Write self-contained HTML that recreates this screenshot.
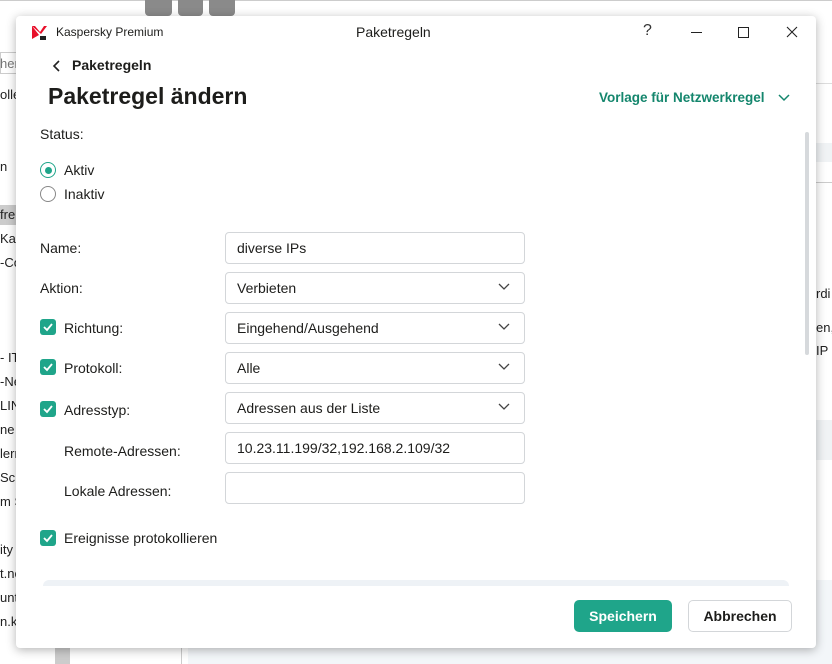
<!DOCTYPE html>
<html><head><meta charset="utf-8"><style>
*{box-sizing:border-box;margin:0;padding:0}
body{width:832px;height:664px;overflow:hidden;background:#fff;font-family:"Liberation Sans",sans-serif;position:relative;color:#1d1d1b}
.a{position:absolute}
.bg{font-size:13px;color:#222;white-space:nowrap}
.dlg{position:absolute;left:16px;top:16px;width:800px;height:632px;background:#fff;border-radius:4px;box-shadow:0 2px 10px rgba(0,0,0,.3)}
.lbl{position:absolute;font-size:14px;color:#1d1d1b}
.inp{position:absolute;left:209px;width:300px;height:32px;border:1px solid #d3d6d9;border-radius:4px;font-size:14px;padding:7px 11px}
.chev{position:absolute;right:14px;top:10px;width:12px;height:8px}
.cb{position:absolute;left:24px;width:16px;height:16px;background:#1fa58a;border-radius:3px}
</style></head><body>
<div class="a" style="left:0;top:0;width:832px;height:1px;background:#ccc"></div>
<div class="a" style="left:145px;top:0;width:27px;height:16px;background:#8a8a8a;border-radius:0 0 4px 4px"></div>
<div class="a" style="left:178px;top:0;width:25px;height:16px;background:#8a8a8a;border-radius:0 0 4px 4px"></div>
<div class="a" style="left:209px;top:0;width:26px;height:16px;background:#8a8a8a;border-radius:0 0 4px 4px"></div>
<div class="a" style="left:0;top:52px;width:20px;height:22px;border:1px solid #ccc"></div>
<div class="a" style="left:0;top:205px;width:20px;height:20px;background:#ccc"></div>
<div class="a" style="left:55px;top:640px;width:15px;height:24px;background:#ccc"></div>
<div class="a" style="left:181px;top:640px;width:1px;height:24px;background:#ccc"></div>
<div class="a" style="left:188px;top:640px;width:644px;height:24px;background:#f3f6f9"></div>
<div class="a" style="left:816px;top:83px;width:16px;height:1px;background:#ddd"></div>
<div class="a" style="left:816px;top:143px;width:16px;height:19px;background:#f0f3f5"></div>
<div class="a" style="left:816px;top:182px;width:16px;height:1px;background:#ccc"></div>
<div class="a" style="left:816px;top:420px;width:16px;height:40px;background:#f0f3f5"></div>
<div class="a" style="left:816px;top:580px;width:16px;height:60px;background:#f3f6f9"></div>
<div class="bg a" style="left:0;top:56px;color:#777">her</div>
<div class="bg a" style="left:0;top:87px">olle</div>
<div class="bg a" style="left:0;top:159px">n</div>
<div class="bg a" style="left:0;top:207px">fre</div>
<div class="bg a" style="left:0;top:231px">Kasp</div>
<div class="bg a" style="left:0;top:255px">-Co</div>
<div class="bg a" style="left:0;top:350px">- IT</div>
<div class="bg a" style="left:0;top:374px">-Ne</div>
<div class="bg a" style="left:0;top:398px">LINK</div>
<div class="bg a" style="left:0;top:422px">ne -</div>
<div class="bg a" style="left:0;top:446px">lern</div>
<div class="bg a" style="left:0;top:470px">Sch</div>
<div class="bg a" style="left:0;top:494px">m S</div>
<div class="bg a" style="left:0;top:542px">ity</div>
<div class="bg a" style="left:0;top:566px">t.ne</div>
<div class="bg a" style="left:0;top:590px">unt</div>
<div class="bg a" style="left:0;top:614px">n.k</div>
<div class="bg a" style="left:816px;top:286px">rdi</div>
<div class="bg a" style="left:816px;top:320px">en,</div>
<div class="bg a" style="left:816px;top:343px">IP</div>

<div class="dlg">
 <svg class="a" style="left:16px;top:9px" width="16" height="16" viewBox="0 0 16 16"><path d="M0 1h3l5 6 4-6h3L9 9z" fill="#e8102a"/><path d="M0 1l7 9-0 0L0 14z" fill="#e8102a"/><path d="M8 11h6v4H8z" fill="#222"/></svg>
 <div class="a" style="left:40px;top:9px;font-size:12px">Kaspersky Premium</div>
 <div class="a" style="left:340px;top:8px;font-size:14px">Paketregeln</div>
 <div class="a" style="left:627px;top:6px;font-size:16px;color:#333">?</div>
 <div class="a" style="left:675px;top:16px;width:11px;height:1px;background:#222"></div>
 <div class="a" style="left:722px;top:11px;width:11px;height:11px;border:1px solid #222"></div>
 <svg class="a" style="left:770px;top:10px" width="12" height="12"><path d="M1 1L11 11M11 1L1 11" stroke="#222" stroke-width="1.1"/></svg>
 <svg class="a" style="left:36px;top:44px" width="10" height="12"><path d="M7 1L2 6l5 5" stroke="#222" stroke-width="1.6" fill="none"/></svg>
 <div class="a" style="left:56px;top:41px;font-size:14px;font-weight:bold">Paketregeln</div>
 <div class="a" style="left:32px;top:67px;font-size:23px;font-weight:bold">Paketregel ändern</div>
 <div class="a" style="left:583px;top:74px;font-size:13.5px;font-weight:bold;color:#14866d">Vorlage für Netzwerkregel</div>
 <svg class="a" style="left:762px;top:78px" width="12" height="8"><path d="M1 1l5 5 5-5" stroke="#14866d" stroke-width="1.5" fill="none"/></svg>
 <div class="a" style="left:789px;top:116px;width:4px;height:223px;background:#d6d9dc;border-radius:2px"></div>
 <div class="lbl" style="left:24px;top:110px">Status:</div>
 <div class="a" style="left:24px;top:146px;width:16px;height:16px;border:1.5px solid #1fa58a;border-radius:50%"></div>
 <div class="a" style="left:28.5px;top:150.5px;width:7px;height:7px;background:#1fa58a;border-radius:50%"></div>
 <div class="lbl" style="left:48px;top:146px">Aktiv</div>
 <div class="a" style="left:24px;top:170px;width:16px;height:16px;border:1.5px solid #888;border-radius:50%"></div>
 <div class="lbl" style="left:48px;top:170px">Inaktiv</div>

 <div class="lbl" style="left:24px;top:224px">Name:</div>
 <div class="inp" style="top:216px">diverse IPs</div>
 <div class="lbl" style="left:24px;top:264px">Aktion:</div>
 <div class="inp" style="top:256px">Verbieten<svg class="chev" viewBox="0 0 12 8"><path d="M1 1l5 5 5-5" stroke="#444" stroke-width="1.3" fill="none"/></svg></div>
 <div class="cb" style="top:303px"><svg width="16" height="16"><path d="M4 8l3 3 5-6" stroke="#fff" stroke-width="1.8" fill="none"/></svg></div>
 <div class="lbl" style="left:48px;top:304px">Richtung:</div>
 <div class="inp" style="top:296px">Eingehend/Ausgehend<svg class="chev" viewBox="0 0 12 8"><path d="M1 1l5 5 5-5" stroke="#444" stroke-width="1.3" fill="none"/></svg></div>
 <div class="cb" style="top:343px"><svg width="16" height="16"><path d="M4 8l3 3 5-6" stroke="#fff" stroke-width="1.8" fill="none"/></svg></div>
 <div class="lbl" style="left:48px;top:344px">Protokoll:</div>
 <div class="inp" style="top:336px">Alle<svg class="chev" viewBox="0 0 12 8"><path d="M1 1l5 5 5-5" stroke="#444" stroke-width="1.3" fill="none"/></svg></div>
 <div class="cb" style="top:385px"><svg width="16" height="16"><path d="M4 8l3 3 5-6" stroke="#fff" stroke-width="1.8" fill="none"/></svg></div>
 <div class="lbl" style="left:48px;top:386px">Adresstyp:</div>
 <div class="inp" style="top:376px">Adressen aus der Liste<svg class="chev" viewBox="0 0 12 8"><path d="M1 1l5 5 5-5" stroke="#444" stroke-width="1.3" fill="none"/></svg></div>
 <div class="lbl" style="left:48px;top:427px">Remote-Adressen:</div>
 <div class="inp" style="top:416px">10.23.11.199/32,192.168.2.109/32</div>
 <div class="lbl" style="left:48px;top:467px">Lokale Adressen:</div>
 <div class="inp" style="top:456px"></div>
 <div class="cb" style="top:514px"><svg width="16" height="16"><path d="M4 8l3 3 5-6" stroke="#fff" stroke-width="1.8" fill="none"/></svg></div>
 <div class="lbl" style="left:48px;top:514px">Ereignisse protokollieren</div>

 <div class="a" style="left:27px;top:564px;width:746px;height:6px;background:#eef2f6;border-radius:6px 6px 0 0"></div>
 <div class="a" style="left:558px;top:584px;width:98px;height:32px;background:#1fa58a;border-radius:5px;color:#fff;font-size:14px;font-weight:bold;text-align:center;line-height:32px">Speichern</div>
 <div class="a" style="left:672px;top:584px;width:104px;height:32px;border:1px solid #d3d6d9;border-radius:5px;font-size:14px;font-weight:bold;text-align:center;line-height:30px">Abbrechen</div>
</div>
</body></html>
